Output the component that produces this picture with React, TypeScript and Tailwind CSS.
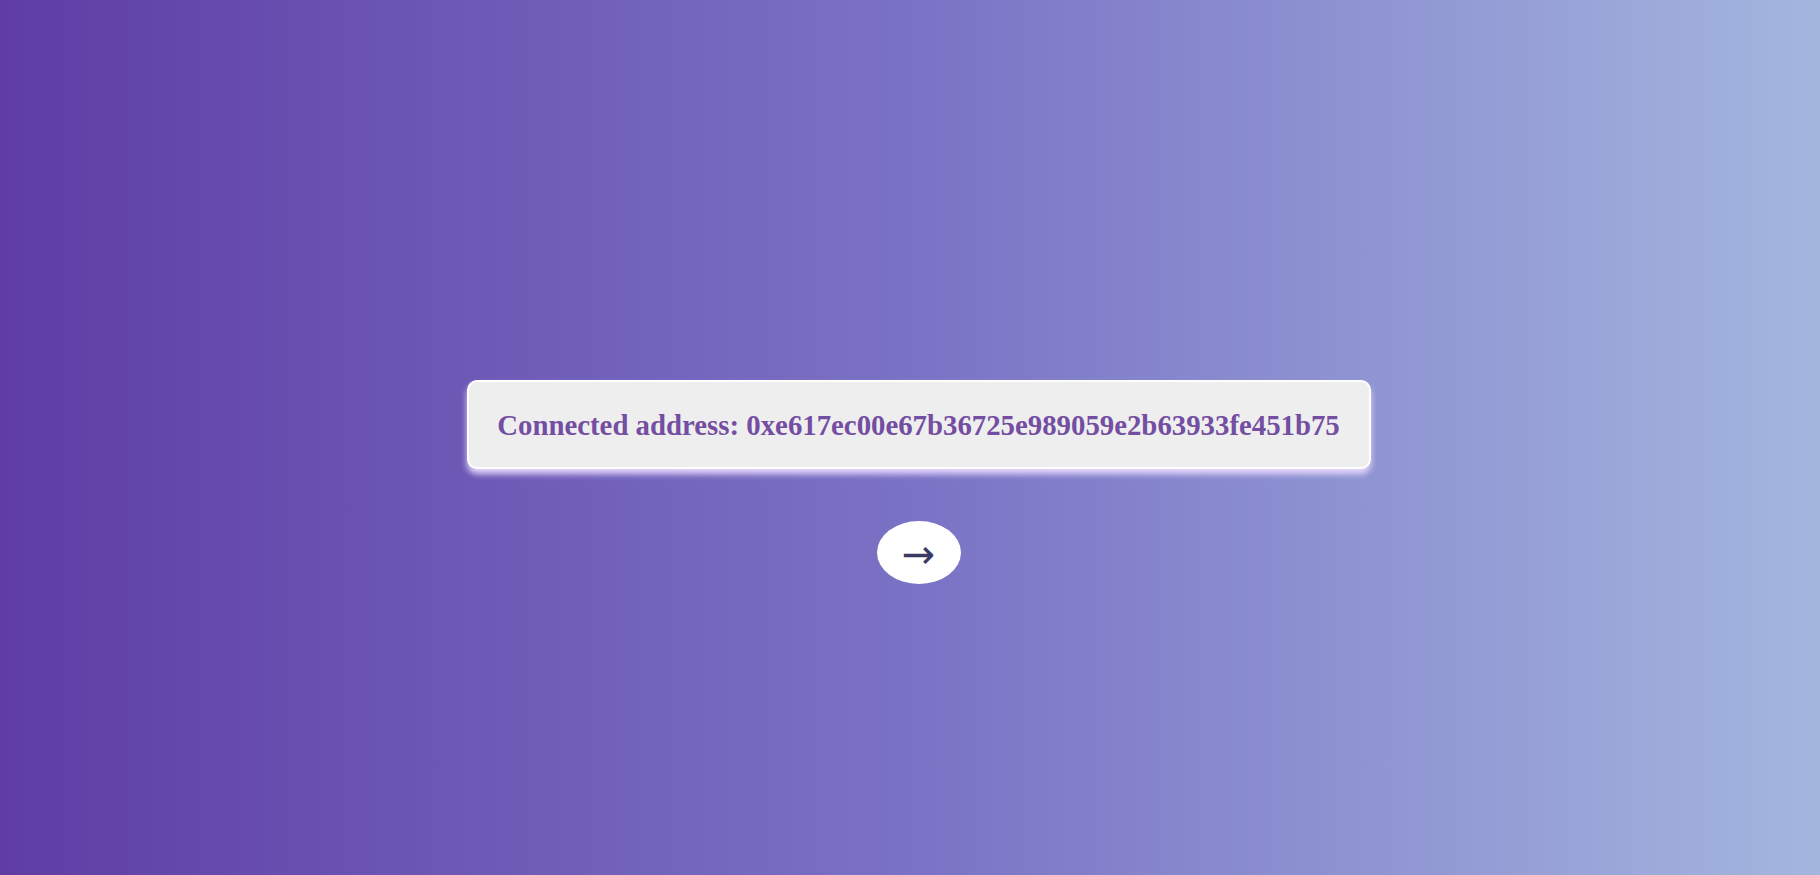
export default function App() {
  const address = '0xe617ec00e67b36725e989059e2b63933fe451b75';

  return (
    <div className="min-h-screen w-full bg-gradient-to-r from-[#5f3da5] via-[#7a72c5] to-[#a4b6de] flex flex-col items-center pt-[380px] pl-[17px]">
      <div className="w-[904px] h-[89px] rounded-[10px] border-2 border-white bg-[#eeeeee] shadow-[0_5px_6px_rgba(235,220,255,0.95)] flex items-center justify-center">
        <p
          className="text-[#744ea2] text-[28.8px] font-bold whitespace-nowrap mt-[2px]"
          style={{ fontFamily: '"Liberation Serif", serif' }}
        >
          Connected address: {address}
        </p>
      </div>
      <button
        className="mt-[52px] w-[84px] h-[63px] rounded-[50%] bg-white flex items-center justify-center text-[#3a3a62] text-[40px] leading-none"
        style={{ fontFamily: '"DejaVu Sans", sans-serif' }}
      >
        <span className="mt-[2px]">→</span>
      </button>
    </div>
  );
}
